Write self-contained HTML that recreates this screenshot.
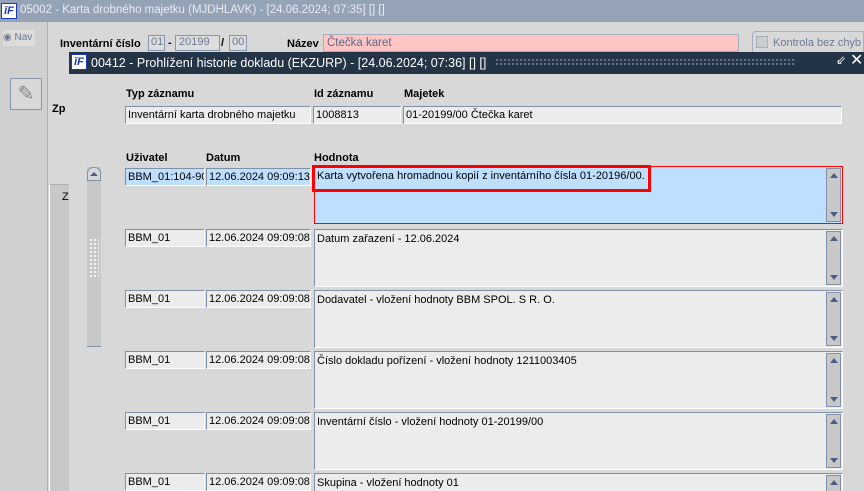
<!DOCTYPE html>
<html style="width:864px;height:491px;overflow:hidden"><head><meta charset="utf-8"><style>
*{margin:0;padding:0;box-sizing:border-box}
body{width:864px;height:491px;overflow:hidden;background:#d8d8d8;font-family:"Liberation Sans",Arial,sans-serif;font-size:11px;color:#000;position:relative}
.a{position:absolute}
.f{position:absolute;height:18px;background:#ececec;border:1px solid #8090a8;border-right-color:#fff;border-bottom-color:#fff;padding:1px 0 0 2px;font-size:11px;white-space:nowrap;overflow:hidden;line-height:15px}
.sel{background:#bfdfff}
.v{position:absolute;left:314px;width:529px;height:58px;background:#ececec;border:1px solid #8090a8;border-right-color:#fff;border-bottom-color:#fff;padding:3px 0 0 2px;font-size:11px;overflow:hidden}
.sb{position:absolute;right:1px;top:1px;width:15px;bottom:1px;background:#c8c8c8;border:1px solid #8090a8}
.sb:before{content:"";position:absolute;left:3px;top:4px;border:4px solid transparent;border-bottom:5px solid #4a5f88;border-top:0}
.sb:after{content:"";position:absolute;left:3px;bottom:4px;border:4px solid transparent;border-top:5px solid #4a5f88;border-bottom:0}
.last .sb{bottom:0;border-bottom:0}
.last .sb:after{display:none}
.lb{position:absolute;font-weight:bold;font-size:11px}
.ifl{position:absolute;width:16px;height:16px;background:#fff;border:1px solid #1a3ab8;color:#1a3ab8;font:italic bold 11px "Liberation Sans",sans-serif;text-align:center;line-height:14px}
</style></head><body>
<div class="a" style="left:0;top:0;width:864px;height:22px;background:#94a3b6"></div>
<div class="ifl" style="left:1px;top:3px">ǐF</div>
<div class="a" style="left:20px;top:4px;color:#e8ecf2;font-size:11.5px">05002 - Karta drobného majetku (MJDHLAVK) - [24.06.2024; 07:35] [] []</div>
<div class="a" style="left:0;top:22px;width:48px;height:469px;background:#d0d0d0;border-right:1px solid #a8b0bc"></div>
<div class="a" style="left:3px;top:30px;width:32px;height:16px;background:#dcdcdc;color:#6b7a95;font-size:10px;white-space:nowrap;line-height:16px">◉ Nav</div>
<div class="a" style="left:10px;top:78px;width:32px;height:32px;border:1px solid #8a96aa;background:#d8d8d8;font-size:20px;text-align:center;line-height:30px;color:#888">✎</div>
<div class="a" style="left:49px;top:22px;width:815px;height:469px;background:#d8d8d8"></div>
<div class="a" style="left:52px;top:103px;font-weight:bold">Zp</div>
<div class="a" style="left:49px;top:184px;width:20px;height:307px;background:#c8c8c8;border-top:1px solid #a8b0bc;border-left:1px solid #fff"></div>
<div class="a" style="left:62px;top:191px">Z</div>
<div class="lb" style="left:60px;top:38px">Inventární číslo</div>
<div class="a" style="left:148px;top:35px;width:17px;height:16px;border:1px solid #8a96b0;color:#6b7a95;background:#ddd;font-size:11px;padding-left:2px">01</div>
<div class="a" style="left:168px;top:37px;font-weight:bold">-</div>
<div class="a" style="left:175px;top:35px;width:45px;height:16px;border:1px solid #8a96b0;color:#6b7a95;background:#ddd;font-size:11px;padding-left:3px">20199</div>
<div class="a" style="left:221px;top:37px;font-weight:bold">/</div>
<div class="a" style="left:229px;top:35px;width:18px;height:16px;border:1px solid #8a96b0;color:#6b7a95;background:#ddd;font-size:11px;padding-left:2px">00</div>
<div class="lb" style="left:287px;top:38px">Název</div>
<div class="a" style="left:323px;top:34px;width:416px;height:18px;background:#ffc4c4;border:1px solid #a8b0c0;color:#5a6c8c;padding-left:3px;font-size:11.5px;line-height:16px">Čtečka karet</div>
<div class="a" style="left:752px;top:31px;width:112px;height:22px;border:1px solid #a8b0c0;border-radius:4px 0 0 0"></div>
<div class="a" style="left:756px;top:36px;width:12px;height:12px;border:1px solid #a8b0c0;background:#ccc"></div>
<div class="a" style="left:773px;top:37px;color:#6b7a95;font-size:11px;white-space:nowrap">Kontrola bez chyb</div>
<div class="a" style="left:69px;top:52px;width:795px;height:22px;background:#243447"></div>
<div class="ifl" style="left:71px;top:54px">ǐF</div>
<div class="a" style="left:91px;top:56px;color:#fff;font-size:12.5px">00412 - Prohlížení historie dokladu (EKZURP) - [24.06.2024; 07:36] [] []</div>
<div class="a" style="left:495px;top:58px;width:300px;height:8px;background-image:radial-gradient(circle,#7a8aa0 0.8px,transparent 1px);background-size:4px 4px"></div>
<div class="a" style="left:836px;top:53px;color:#fff;font-size:12px">⇙</div>
<div class="a" style="left:850px;top:52px;color:#fff;font-size:16px;line-height:18px">✕</div>
<div class="a" style="left:69px;top:74px;width:795px;height:417px;background:#d8d8d8"></div>
<div class="lb" style="left:126px;top:88px">Typ záznamu</div>
<div class="lb" style="left:314px;top:88px">Id záznamu</div>
<div class="lb" style="left:404px;top:88px">Majetek</div>
<div class="f" style="left:125px;top:106px;width:186px">Inventární karta drobného majetku</div>
<div class="f" style="left:313px;top:106px;width:88px">1008813</div>
<div class="f" style="left:403px;top:106px;width:439px">01-20199/00 Čtečka karet</div>
<div class="lb" style="left:126px;top:152px">Uživatel</div>
<div class="lb" style="left:206px;top:152px">Datum</div>
<div class="lb" style="left:314px;top:152px">Hodnota</div>
<div class="a" style="left:87px;top:167px;width:14px;height:180px;background:#c8c8c8;border-bottom:1px solid #8090a8"></div>
<div class="a" style="left:87px;top:167px;width:14px;height:14px;border:1px solid #8090a8;border-radius:6px 6px 0 0;background:#d8d8d8"></div>
<div class="a" style="left:90px;top:172px;border:4px solid transparent;border-bottom:4px solid #4a5f88;border-top:0"></div>
<div class="a" style="left:89px;top:238px;width:10px;height:40px;background-image:radial-gradient(circle,#fff 0.8px,transparent 1px);background-size:4px 4px"></div>
<div class="f sel" style="left:125px;top:168px;width:80px">BBM_01:104-90</div>
<div class="f sel" style="left:206px;top:168px;width:105px">12.06.2024 09:09:13</div>
<div class="v" style="top:166px;background:#bfdfff;border:1px solid #f00">Karta vytvořena hromadnou kopií z inventárního čísla 01-20196/00.<div class="sb"></div></div>
<div class="a" style="left:312px;top:165px;width:339px;height:27px;border:3px solid #f00"></div>
<div class="f" style="left:125px;top:229px;width:80px">BBM_01</div>
<div class="f" style="left:206px;top:229px;width:105px">12.06.2024 09:09:08</div>
<div class="v" style="top:229px">Datum zařazení - 12.06.2024<div class="sb"></div></div>
<div class="f" style="left:125px;top:290px;width:80px">BBM_01</div>
<div class="f" style="left:206px;top:290px;width:105px">12.06.2024 09:09:08</div>
<div class="v" style="top:290px">Dodavatel - vložení hodnoty BBM SPOL. S R. O.<div class="sb"></div></div>
<div class="f" style="left:125px;top:351px;width:80px">BBM_01</div>
<div class="f" style="left:206px;top:351px;width:105px">12.06.2024 09:09:08</div>
<div class="v" style="top:351px">Číslo dokladu pořízení - vložení hodnoty 1211003405<div class="sb"></div></div>
<div class="f" style="left:125px;top:412px;width:80px">BBM_01</div>
<div class="f" style="left:206px;top:412px;width:105px">12.06.2024 09:09:08</div>
<div class="v" style="top:412px">Inventární číslo - vložení hodnoty 01-20199/00<div class="sb"></div></div>
<div class="f" style="left:125px;top:473px;width:80px">BBM_01</div>
<div class="f" style="left:206px;top:473px;width:105px">12.06.2024 09:09:08</div>
<div class="v last" style="top:473px;height:18px;border-bottom:0">Skupina - vložení hodnoty 01<div class="sb"></div></div>
</body></html>
